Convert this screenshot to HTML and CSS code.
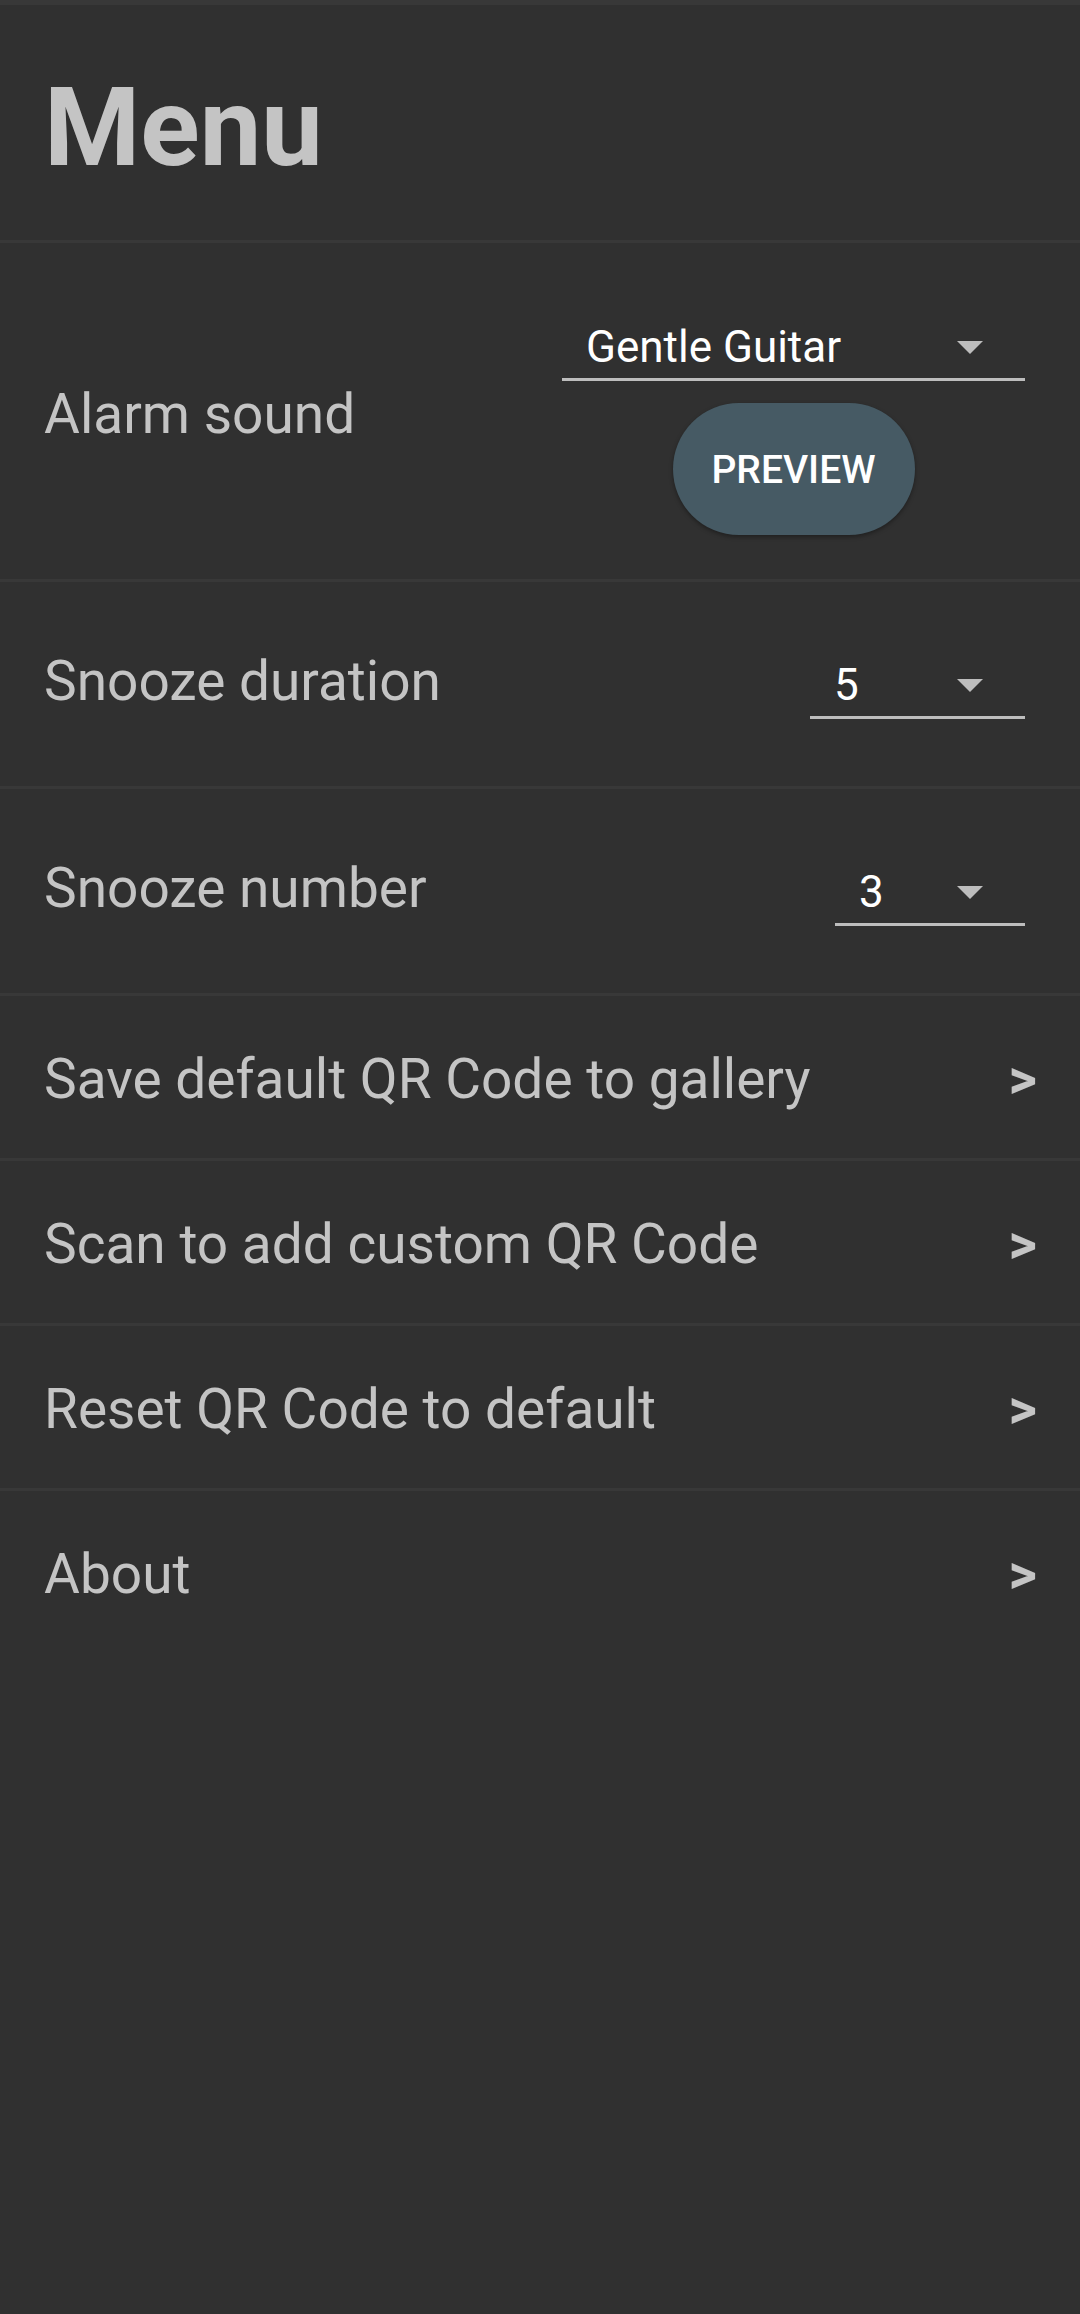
FILE: index.html
```html
<!DOCTYPE html>
<html lang="en">
<head>
<meta charset="utf-8">
<title>Menu</title>
<link rel="stylesheet" href="styles.css">
</head>
<body>
<div class="screen">
  <div class="statusbar"></div>
  <header class="header">
    <h1 class="title">Menu</h1>
  </header>

  <section class="row row-alarm">
    <div class="label">Alarm sound</div>
    <div class="alarm-controls">
      <div class="dropdown dd-alarm">
        <span class="value">Gentle Guitar</span>
        <svg class="arrow" width="26" height="13" viewBox="0 0 26 13"><path d="M0 0 L26 0 L13 13 Z" fill="#bdbdbd"/></svg>
      </div>
      <button class="preview">PREVIEW</button>
    </div>
  </section>

  <section class="row row-snooze">
    <div class="label">Snooze duration</div>
    <div class="dropdown dd-duration">
      <span class="value">5</span>
      <svg class="arrow" width="26" height="13" viewBox="0 0 26 13"><path d="M0 0 L26 0 L13 13 Z" fill="#bdbdbd"/></svg>
    </div>
  </section>

  <section class="row row-snooze">
    <div class="label">Snooze number</div>
    <div class="dropdown dd-number">
      <span class="value">3</span>
      <svg class="arrow" width="26" height="13" viewBox="0 0 26 13"><path d="M0 0 L26 0 L13 13 Z" fill="#bdbdbd"/></svg>
    </div>
  </section>

  <section class="row row-link">
    <div class="label">Save default QR Code to gallery</div>
    <span class="chev">&gt;</span>
  </section>
  <section class="row row-link">
    <div class="label">Scan to add custom QR Code</div>
    <span class="chev">&gt;</span>
  </section>
  <section class="row row-link">
    <div class="label">Reset QR Code to default</div>
    <span class="chev">&gt;</span>
  </section>
  <section class="row row-link">
    <div class="label">About</div>
    <span class="chev">&gt;</span>
  </section>
</div>
</body>
</html>
```

FILE: styles.css
```css
html, body {
  margin: 0;
  padding: 0;
  background: #303030;
}

body {
  font-family: Roboto, "Noto Sans", "Liberation Sans", sans-serif;
  color: #c4c4c4;
}

.screen {
  width: 1080px;
  min-height: 2314px;
  background: #303030;
}

.statusbar {
  height: 5px;
  background: #383838;
}

.header {
  height: 235px;
  box-sizing: border-box;
  padding: 68px 44px 0 44px;
}

.title {
  margin: 0;
  font-size: 110px;
  line-height: 110px;
  font-weight: 700;
  color: #c4c4c4;
}

.row {
  display: flex;
  box-sizing: border-box;
  border-top: 3px solid #383838;
  padding: 0 44px;
}

.label {
  font-size: 55px;
  color: #c4c4c4;
  white-space: nowrap;
}

/* Alarm row */
.row-alarm {
  height: 339px;
  align-items: center;
  justify-content: space-between;
  padding-right: 55px;
}

.row-alarm .label {
  padding-top: 5px;
}

.alarm-controls {
  display: flex;
  flex-direction: column;
  align-items: center;
  margin-top: 32px;
  gap: 22px;
}

/* Dropdown */
.dropdown {
  display: flex;
  align-items: center;
  height: 56px;
  padding: 0 42px 3px 24px;
  border-bottom: 3px solid #bdbdbd;
}

.dropdown .value {
  flex: 1;
  font-size: 44px;
  line-height: 56px;
  color: #ffffff;
  white-space: nowrap;
}

.dropdown .arrow {
  flex: none;
  display: block;
}

.dd-alarm {
  width: 397px;
}

.dd-duration {
  width: 149px;
}

.dd-number {
  width: 124px;
}

.preview {
  width: 242px;
  height: 132px;
  border: none;
  border-radius: 66px;
  background: #465a64;
  color: #ffffff;
  font-family: Roboto, "Noto Sans", "Liberation Sans", sans-serif;
  font-size: 39px;
  font-weight: 500;
  padding: 2px 0 0 0;
  box-shadow: 0 2px 4px rgba(0, 0, 0, 0.35);
}

/* Snooze rows */
.row-snooze {
  height: 207px;
  align-items: baseline;
  justify-content: space-between;
  padding-top: 67px;
  padding-right: 55px;
}

/* Link rows */
.row-link {
  height: 165px;
  align-items: center;
  justify-content: space-between;
  padding-top: 4px;
  padding-right: 43px;
}

.chev {
  font-size: 55px;
  font-weight: 700;
  color: #c4c4c4;
}
```
